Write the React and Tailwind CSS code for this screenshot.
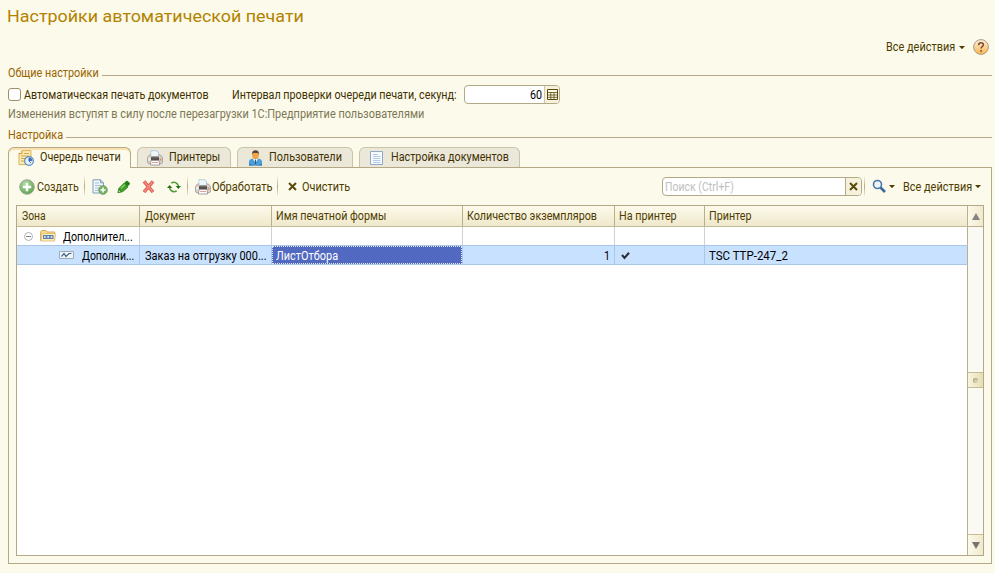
import { useLayoutEffect, useRef, useState } from 'react';

/* Single-line caption condensed horizontally to the given width */
function Label({ w, className = '', children }) {
  const ref = useRef(null);
  const [scale, setScale] = useState(1);
  useLayoutEffect(() => {
    setScale(w / ref.current.offsetWidth);
  }, [w, children]);
  return (
    <span className={'block shrink-0 whitespace-nowrap ' + className} style={{ width: w }}>
      <span ref={ref} className="inline-block origin-left" style={{ transform: `scaleX(${scale})` }}>
        {children}
      </span>
    </span>
  );
}

function Svg({ className = '', s = 16, children }) {
  return (
    <svg className={'block shrink-0 ' + className} width={s} height={s} viewBox={`0 0 ${s} ${s}`}>
      {children}
    </svg>
  );
}

const Printer = ({ className }) => (
  <Svg className={className}>
    <path d="M4 6.500V.8h5.500l2 1.500v4.200z" fill="#e4f1fb" stroke="#a3bccf" strokeWidth=".8" />
    <path d="M.6 7.500 2.600 5h10.800l2 2.500v5.300l-1.400 1H2l-1.400-1z" fill="#d6d3ce" stroke="#9a968f" strokeWidth=".8" />
    <path d="M4.300 5V1.500h5l1.800 1.200V6H4.300z" fill="#edf6fd" />
    <path d="M4 7h8v3.200H4z" fill="#57524e" />
    <path d="M4.500 6.300h7v1.200h-7z" fill="#8a8580" />
    <path d="M1.400 8h2v2.500h-2z" fill="#f6f4f1" />
    <path d="M12.600 8.500h1.800v2h-1.800z" fill="#e08a70" />
    <path d="M4 10.500h8l.6 4.500H3.400z" fill="#fff" stroke="#8f8c89" strokeWidth=".8" />
    <path d="M5 12.500h6" stroke="#e9a18c" />
  </Svg>
);

const QueueIcon = ({ className }) => (
  <Svg className={className}>
    <path d="M4 .6h9v14H1V3.600z" fill="#fbe9b0" stroke="#dbb25c" />
    <path d="M1 3.600h3V.8" fill="#fff6d8" stroke="#c99a3c" />
    <path d="M6 3.500h5M3 6h8M3 8.500h4M3 11h3" stroke="#d1a64d" />
    <circle cx="11" cy="11" r="4.4" fill="#e5f2fd" stroke="#5b8cc0" strokeWidth="1.2" />
    <path d="M11 11V7.5a3.5 3.5 0 0 1 3.4 3.5z" fill="#3b6fc4" />
    <path d="M11 8v3l2 2" fill="none" stroke="#3f69a0" />
  </Svg>
);

const UserIcon = ({ className }) => (
  <Svg className={className}>
    <path d="M1 15.500V12q0-2.600 3-3.200h7q3 .6 3 3.200v3.500z" fill="#4a9fda" />
    <path d="M1 15.500V14q6.500 2.400 13 0v1.500z" fill="#2a6ea8" />
    <path d="m5 8.600 2.500 5.400L10 8.600z" fill="#fff" />
    <path d="m7 9.600-.5 3.500 1 1.600 1-1.600L8 9.600z" fill="#2e5a86" />
    <ellipse cx="7.500" cy="5" rx="3.300" ry="4.300" fill="#eda548" />
    <path d="M4.100 5Q3.600.4 7.500.3T10.900 5L10 3H5z" fill="#5e4632" />
  </Svg>
);

const DocIcon = ({ className }) => (
  <Svg className={className}>
    <path d="M1.500 1.500h12v13h-12z" fill="#f5fafe" stroke="#93a8c0" />
    <path d="M4 4.500h5M4 6.500h7.400M4 8.500h7.400M4 10.500h7.400M4 12.500h7.400" stroke="#b3cce4" />
  </Svg>
);

const CreateIcon = () => (
  <Svg>
    <defs>
      <radialGradient id="green" cx=".4" cy=".3" r=".8">
        <stop offset="0" stopColor="#b5dba5" />
        <stop offset="1" stopColor="#4f9e45" />
      </radialGradient>
    </defs>
    <circle cx="8" cy="8" r="7.3" fill="url(#green)" stroke="#a0a89a" />
    <path d="M8 3.8v8.4M3.8 8h8.4" stroke="#fff" strokeWidth="2.4" />
  </Svg>
);

const CopyIcon = () => (
  <Svg>
    <path d="M1 .8h7.5l3 3V14H1z" fill="#f0f6fb" stroke="#7f9db8" />
    <path d="M8.5.8v3h3" fill="#c8daea" stroke="#7f9db8" />
    <path d="M3 4h4M3 6.5h6M3 9h4M3 11.5h3" stroke="#a3bed6" />
    <circle cx="11" cy="11" r="4.4" fill="#6eb35c" stroke="#7e9c72" strokeWidth=".8" />
    <path d="M11 8.4v5.2M8.4 11h5.2" stroke="#fff" strokeWidth="1.6" />
  </Svg>
);

const PencilIcon = () => (
  <Svg s={14}>
    <path d="m1 12.600 1-4.400L7.200 3l3.900 3.900-5.200 4.700z" fill="#3fa02a" stroke="#237516" strokeWidth=".7" />
    <path d="m7.200 3 2-2q1-.6 2 .4l1.400 1.400q.8 1 0 1.800l-2 2z" fill="#238014" />
    <path d="m4 8.300 3.800-3.800" stroke="#8ad66f" strokeWidth="1.300" />
    <path d="m1 12.6.7-3 2.400 2.300z" fill="#e5efc5" stroke="#237516" strokeWidth=".7" />
  </Svg>
);

const DeleteIcon = () => (
  <Svg s={13}>
    <path d="M2 1.300 11 12M11 1.300 2 12" stroke="#dd5449" strokeWidth="3.400" />
    <path d="M2.300 1.700 10.700 11.600M10.700 1.700 2.300 11.600" stroke="#f0897c" strokeWidth="1.800" />
  </Svg>
);

const RefreshIcon = () => (
  <Svg s={14}>
    <path d="M4.300 3.200Q7.500 1.200 10 3.600q1.200 1.200 1.400 2.600M9.700 10.800Q6.500 12.800 4 10.400 2.800 9.200 2.600 7.800" fill="none" stroke="#4f9a3c" strokeWidth="1.500" />
    <path d="M8.700 6H14l-2.600 3z" fill="#23720f" />
    <path d="M0 8h5.300L2.600 5z" fill="#23720f" />
  </Svg>
);

const Cross = ({ className }) => (
  <Svg s={9} className={className}>
    <path d="m1 1 7 7M8 1 1 8" stroke="#5c4a0c" strokeWidth="2" />
  </Svg>
);

const Down = ({ className = '' }) => (
  <svg className={'block shrink-0 ' + className} width="6" height="3" viewBox="0 0 6 3">
    <path d="M0 0h6L3 3.200z" fill="#4e3c00" />
  </svg>
);

const Separator = ({ className }) => (
  <div className={'h-[19px] w-px shrink-0 bg-gradient-to-b from-[#f2eeda] via-[#b5ab84] to-[#f2eeda] ' + className} />
);

const GroupTitle = ({ w, h, children }) => (
  <div className={'flex items-center ' + h}>
    <Label w={w} className="pt-px text-[#9a6400]">{children}</Label>
    <div className="ml-[3px] mr-[3px] mt-[7px] h-px flex-1 bg-[#b3a986]" />
  </div>
);

const Tab = ({ width, icon, w, gap, children }) => (
  <div className={'flex h-5 items-center rounded-t-[6px] border border-b-0 border-[#c9c3a8] bg-[#ebe8da] ' + width}>
    {icon}
    <Label w={w} className={'-mt-px ' + gap}>{children}</Label>
  </div>
);

const columns = 'grid grid-cols-[123px_132px_191px_152px_90px_263px]';
const head = 'flex items-center border-r border-[#b9af8b]';
const cell = 'flex min-w-0 items-center border-r border-[#ccd3dc]';
const sel = 'flex min-w-0 items-center border-r border-[#aac6e6]';

export default function App() {
  return (
    <div className="h-[573px] w-[995px] overflow-hidden bg-[#fcfaeb] pl-2 font-['Roboto','Liberation_Sans',sans-serif] text-[12.5px] leading-4 text-[#3f3000]">
      <div className="-ml-px flex h-8 items-center text-[17px] leading-5 text-[#b28300]">
        <Label w={297}>Настройки автоматической печати</Label>
      </div>
      <div className="flex h-[30px] items-center justify-end pr-[6px]">
        <Label w={69} className="text-[#4e3c00]">Все действия</Label>
        <Down className="ml-1" />
        <Svg className="ml-2">
          <defs>
            <linearGradient id="orange" x2="0" y2="1">
              <stop offset="0" stopColor="#fff0de" />
              <stop offset="1" stopColor="#fbb54b" />
            </linearGradient>
          </defs>
          <circle cx="8" cy="8" r="7.400" fill="url(#orange)" stroke="#a99a88" />
          <path d="M5.600 6.200q0-2.400 2.400-2.400t2.400 2q0 1-1.200 1.800T8 9.600M8 11v1.700" fill="none" stroke="#7a4d32" strokeWidth="1.500" />
        </Svg>
      </div>

      <GroupTitle w={91} h="h-5">Общие настройки</GroupTitle>
      <div className="flex h-[25px] items-center">
        <div className="h-[13px] w-[13px] rounded-[3px] border border-[#9b9068] bg-white" />
        <Label w={185} className="ml-[3px]">Автоматическая печать документов</Label>
        <Label w={225} className="ml-[23px]">Интервал проверки очереди печати, секунд:</Label>
        <div className="ml-[7px] flex h-[19px] w-24 overflow-hidden rounded-[4px] border border-[#b3a986] bg-white">
          <div className="flex flex-1 items-center justify-end pr-[2px] text-black"><Label w={12}>60</Label></div>
          <div className="flex w-[15px] items-center justify-center border-l border-[#cfc7a6] bg-[#f5f1da]">
            <Svg s={11}>
              <path d="M.5.5h10v10H.5z" fill="#fdfbe9" stroke="#5c4a0c" />
              <path d="M1 3.500h9M1 6h9M1 8.300h9M3.800 3.500V10M7 3.500V10" stroke="#5c4a0c" strokeWidth=".8" />
            </Svg>
          </div>
        </div>
      </div>
      <div className="flex h-[14px] items-center">
        <Label w={416} className="text-[#7d7755]">Изменения вступят в силу после перезагрузки 1С:Предприятие пользователями</Label>
      </div>
      <GroupTitle w={55} h="h-[26px]">Настройка</GroupTitle>

      <div className="flex h-5 items-start gap-[6px]">
        <div className="z-10 flex h-[21px] w-[123px] shrink-0 items-center rounded-t-[6px] border border-b-0 border-[#b3a986] bg-[#fcfaeb] shadow-[inset_0_2px_0_#fbe0b0]">
          <QueueIcon className="ml-[9px]" />
          <Label w={81} className="-mt-[2px] ml-[6px]">Очередь печати</Label>
        </div>
        <Tab width="w-[94px]" icon={<Printer className="ml-[9px]" />} w={51} gap="ml-[6px]">Принтеры</Tab>
        <Tab width="w-[116px]" icon={<UserIcon className="ml-[10px]" />} w={73} gap="ml-[5px]">Пользователи</Tab>
        <Tab width="w-[161px]" icon={<DocIcon className="ml-[9px]" />} w={118} gap="ml-[6px]">Настройка документов</Tab>
      </div>

      <div className="h-[397px] w-[984px] border border-[#b3a986] px-[7px]">
        <div className="flex h-[37px] items-center pl-[3px] text-[#4e3c00]">
          <CreateIcon />
          <Label w={42} className="ml-[2px]">Создать</Label>
          <Separator className="ml-[5px] mr-[7px]" />
          <CopyIcon />
          <div className="ml-[9px]"><PencilIcon /></div>
          <div className="ml-[11px]"><DeleteIcon /></div>
          <div className="ml-[12px]"><RefreshIcon /></div>
          <Separator className="ml-[6px] mr-[7px]" />
          <Printer />
          <Label w={61} className="ml-[1px]">Обработать</Label>
          <Separator className="ml-1 mr-[10px]" />
          <Cross />
          <Label w={48} className="ml-[5px]">Очистить</Label>
          <div className="ml-auto flex h-[19px] w-[200px] overflow-hidden rounded-[4px] border border-[#b3a986] bg-white">
            <div className="flex flex-1 items-center pl-[2px]"><Label w={69} className="text-[#c0c0c0]">Поиск (Ctrl+F)</Label></div>
            <div className="flex w-4 items-center justify-center border-l border-[#b3a986] bg-[#f5f1da]"><Cross /></div>
          </div>
          <Separator className="ml-[2px] mr-[7px]" />
          <Svg s={15}>
            <path d="m8.500 8.500 4.500 4.500" stroke="#3c6c9c" strokeWidth="2.600" />
            <circle cx="5.500" cy="5.500" r="4" fill="#eef5fa" stroke="#4779a8" strokeWidth="1.600" />
          </Svg>
          <Down className="ml-[2px]" />
          <Label w={69} className="ml-2">Все действия</Label>
          <Down className="ml-[3px] mr-[3px]" />
        </div>

        <div className="flex h-[351px] w-[968px] border border-[#b3a986] bg-white">
          <div className="flex w-[951px] shrink-0 flex-col text-black">
            <div className={'h-[21px] border-b border-[#c5bb95] bg-gradient-to-b from-[#fcfaeb] to-[#efe8cb] text-[#4e3c00] ' + columns}>
              <div className={head + ' pl-[5px]'}><Label w={24}>Зона</Label></div>
              <div className={head + ' pl-[5px]'}><Label w={50}>Документ</Label></div>
              <div className={head + ' pl-1'}><Label w={110}>Имя печатной формы</Label></div>
              <div className={head + ' pl-1'}><Label w={130}>Количество экземпляров</Label></div>
              <div className={head + ' pl-1'}><Label w={58}>На принтер</Label></div>
              <div className={head + ' pl-1'}><Label w={43}>Принтер</Label></div>
            </div>
            <div className={'h-[19px] border-b border-[#aac6e6] ' + columns}>
              <div className={cell + ' pl-[7px]'}>
                <Svg s={9}>
                  <circle cx="4.500" cy="4.500" r="4" fill="#fff" stroke="#b0b0b0" />
                  <path d="M2 4.500h5" stroke="#808080" />
                </Svg>
                <Svg className="ml-[7px]">
                  <path d="M.6 12.500V3.500l1-1h4l1.500 1.500h7.500v8.500z" fill="#f5dc91" stroke="#d3ad57" />
                  <path d="M2 5.500h13.500l-1 7.500H1z" fill="#fcedb9" stroke="#dcbb6d" strokeWidth=".8" />
                  <path d="M3 7h10.500v4H3z" fill="#5f81ab" />
                  <path d="M4 8.200h1.800v1.600H4zm3.300 0h1.800v1.600H7.300zm3.300 0h1.800v1.600h-1.800z" fill="#f3f7fa" />
                </Svg>
                <Label w={70} className="ml-[7px] pt-px">Дополнител...</Label>
              </div>
              <div className={cell} />
              <div className={cell} />
              <div className={cell} />
              <div className={cell} />
              <div className="border-r border-[#b9af8b]" />
            </div>
            <div className={'h-[19px] border-b border-[#aac6e6] bg-[#c8e1ff] ' + columns}>
              <div className={sel + ' pl-[42px]'}>
                <svg className="block shrink-0" width="15" height="8" viewBox="0 0 15 8">
                  <path d="M.5.5h14v7H.5z" fill="#edf4fa" stroke="#9cabba" />
                  <path d="m2.500 5.500 2.500-3 2 3 3-3h2.500" fill="none" stroke="#456583" strokeWidth="1.200" />
                </svg>
                <Label w={52} className="ml-2 pt-px">Дополни...</Label>
              </div>
              <div className={sel + ' pl-[5px]'}><Label w={122} className="pt-px">Заказ на отгрузку 000...</Label></div>
              <div className={sel}>
                <div className="flex h-[18px] flex-1 items-center border border-dotted border-[#e5e9ff] bg-[#5169c0] pl-[3px] text-white"><Label w={62} className="pt-px">ЛистОтбора</Label></div>
              </div>
              <div className={sel + ' justify-end pr-1'}><Label w={6} className="pt-px">1</Label></div>
              <div className={sel + ' pl-[6px]'}>
                <Svg s={9}><path d="m1 4 2.500 3L8 1.800" fill="none" stroke="#27303a" strokeWidth="2.100" /></Svg>
              </div>
              <div className="flex items-center border-r border-[#b9af8b] pl-1"><Label w={79} className="pt-px">TSC TTP-247_2</Label></div>
            </div>
            <div className="flex-1 border-r border-[#b9af8b]" />
          </div>
          <div className="flex flex-1 flex-col bg-[#faf9f4]">
            <div className="flex h-[21px] items-center justify-center border-b border-[#b9af8b] bg-gradient-to-r from-[#fbf9ea] to-[#efe9cd]">
              <svg width="8" height="7" viewBox="0 0 8 7"><path d="M4 0 8 7H0z" fill="#85827f" /></svg>
            </div>
            <div className="h-[145px]" />
            <div className="flex h-4 items-center justify-center border-y border-[#c5bd94] bg-gradient-to-r from-[#f8f5df] to-[#e5deb6]">
              <div className="h-[5px] w-[5px] rounded-full border-l border-t border-[#aaa77e] bg-[#d5d0a8]" />
            </div>
            <div className="flex-1" />
            <div className="flex h-[21px] items-center justify-center border-t border-[#c5bd94] bg-gradient-to-r from-[#fbf9ea] to-[#efe9cd]">
              <svg width="8" height="7" viewBox="0 0 8 7"><path d="M0 0h8L4 7z" fill="#75726f" /></svg>
            </div>
          </div>
        </div>
      </div>
    </div>
  );
}
